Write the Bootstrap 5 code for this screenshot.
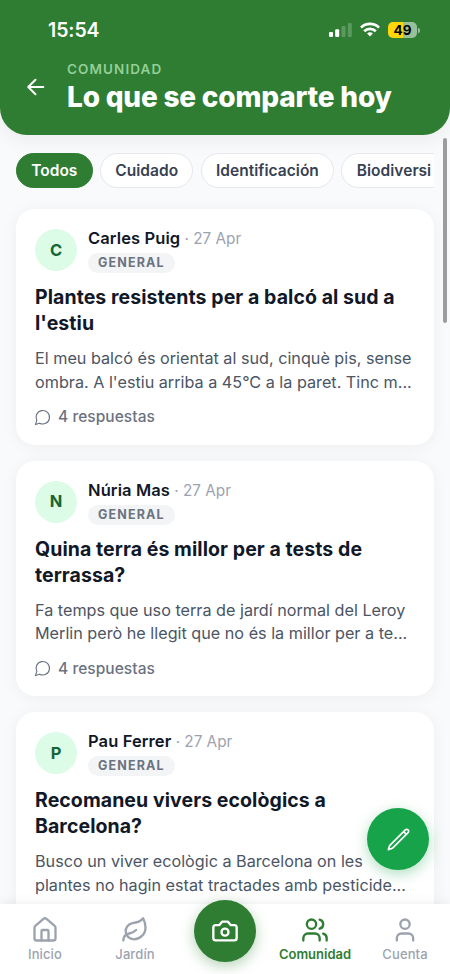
<!DOCTYPE html>
<html lang="es">
<head>
<meta charset="utf-8">
<meta name="viewport" content="width=device-width, initial-scale=1">
<title>Comunidad</title>
<link href="https://cdn.jsdelivr.net/npm/bootstrap@5.3.0/dist/css/bootstrap.min.css" rel="stylesheet">
<style>
html,body{height:974px;overflow:hidden}
body{font-family:Inter,"Liberation Sans",sans-serif;background:#f9fafb;color:#111827}
svg{display:block;flex:none}
.ico{fill:none;stroke:currentColor;stroke-width:2;stroke-linecap:round;stroke-linejoin:round}
.ico.fine{stroke-width:1.6}
.app{width:450px;height:974px}
.hero{height:134.5px;background:#2e7d32;border-radius:0 0 27px 27px;box-shadow:0 4px 20px rgba(17,24,39,.07)}
.status{height:60px;padding:0 30px 0 48px}
.clock{font-size:19.5px;font-weight:600;line-height:22px;letter-spacing:-.1px}
.wifi{margin-left:7px}
.battery{width:29px;height:16px;border-radius:5px;background:linear-gradient(90deg,#ffd60a 50%,#98c09a 50%);color:#000;font-size:13.5px;font-weight:700;line-height:16px}
.battery-tip{width:2px;height:5px;border-radius:0 2px 2px 0;background:#98c09a;margin-left:1px}
.eyebrow{font-size:13.5px;font-weight:600;letter-spacing:1.1px;line-height:18px;color:#93cf96}
.headline{font-size:28px;font-weight:800;line-height:39px;letter-spacing:-.2px}
.titles{margin-left:21px}
.back{padding:15px 0 0 25px}
.filters{margin:18.5px 16px 0;height:35px;gap:7.3px}
.chip{height:35px;padding:0 14.3px;border:1px solid #e5e7eb;border-radius:18px;background:#fff;color:#374151;font-size:15.5px;font-weight:600;line-height:33px;letter-spacing:.03px;flex:none}
.chip.on{background:#2e7d32;border-color:#2e7d32;color:#fff;letter-spacing:0}
.chip-wide{width:128px}
.feed{margin:21px 16px 0;gap:16px}
.post{height:235.6px;border:0;border-radius:19px;padding:20px 19px 0;box-shadow:0 2px 16px rgba(17,24,39,.05);flex:none}
.avatar{width:42px;height:42px;background:#dcfce7;color:#166534;font-size:16.5px;font-weight:700}
.by{margin-left:11px}
.who{font-size:16.5px;line-height:20px;font-weight:600;letter-spacing:.1px;margin-top:-1px}
.when{color:#9ca3af;font-weight:400;font-size:15.3px;letter-spacing:0}
.tag{height:20px;margin-top:3px;padding:0 10px;border-radius:10px;background:#f3f4f6;color:#6b7280;font-size:12.5px;font-weight:700;letter-spacing:1.15px;line-height:20px}
.byline{height:43px}
.topic{font-size:19.5px;font-weight:700;line-height:26px;letter-spacing:.07px;margin:12px 0 0}
.excerpt{font-size:16.2px;line-height:23.5px;letter-spacing:0;color:#4b5563;margin:11px 0 0}
.replies{font-size:15.5px;font-weight:500;line-height:20px;letter-spacing:.05px;color:#6b7280;margin:13px 0 0 -1px;gap:7px}
.ln{display:block;width:max-content}
.scroller{left:443px;top:138px;width:4px;height:185px;border-radius:2px;background:#9b9c9d}
.compose{left:367px;top:808px;width:62px;height:62px;background:#16a34a;box-shadow:0 4px 14px rgba(22,163,74,.35)}
.tabs{left:0;top:904px;width:450px;height:70px;background:#fff;box-shadow:0 -2px 10px rgba(17,24,39,.06)}
.tab{width:90px;color:#9ca3af;font-size:13px;font-weight:500;line-height:16px;letter-spacing:.1px;padding-top:11.5px}
.tab.on{color:#2e7d32;font-weight:600;letter-spacing:0}
.tab > svg{margin-bottom:2.5px}
.snap{width:62px;height:62px;margin-top:-4px;background:#2e7d32;box-shadow:0 4px 14px rgba(46,125,50,.35)}
</style>
<script src="https://cdn.jsdelivr.net/npm/bootstrap@5.3.0/dist/js/bootstrap.bundle.min.js"></script>
</head>
<body>
<div class="app position-relative overflow-hidden d-flex flex-column">
<header class="hero text-white flex-shrink-0">
 <div class="status d-flex align-items-center justify-content-between">
  <span class="clock">15:54</span>
  <div class="d-flex align-items-center">
   <svg width="24" height="16" viewBox="0 0 24 16" fill="#fff"><rect x="0" y="10" width="4" height="5" rx="1"/><rect x="6.200" y="7.200" width="4" height="7.800" rx="1"/><rect x="12.500" y="4" width="4" height="11" rx="1" opacity=".22"/><rect x="18.800" y="1" width="4" height="14" rx="1" opacity=".22"/></svg>
   <svg class="wifi" width="20" height="16" viewBox="0 0 20 16" fill="none" stroke="#fff" stroke-width="2.700"><path d="M1 5.600a12.800 12.800 0 0 1 18 0M4.200 9.200a8.200 8.200 0 0 1 11.600 0"/><path d="M10 10.300c1.200 0 2.100.4 2.900 1.100L10 14.600l-2.900-3.200c.8-.7 1.700-1.100 2.900-1.100z" fill="#fff" stroke="none"/></svg>
   <span class="battery text-center ms-2">49</span><span class="battery-tip"></span>
  </div>
 </div>
 <div class="d-flex">
  <div class="back"><svg class="ico" width="21" height="24" viewBox="0 0 21 24"><path d="M18.300 12H3.200M10.500 4.800L3.200 12l7.300 7.200"/></svg></div>
  <div class="titles"><div class="eyebrow">COMUNIDAD</div><h1 class="headline m-0 text-nowrap">Lo que se comparte hoy</h1></div>
 </div>
</header>
<div class="filters d-flex overflow-hidden flex-shrink-0 text-nowrap">
 <span class="chip on">Todos</span><span class="chip">Cuidado</span><span class="chip">Identificación</span><span class="chip chip-wide">Biodiversi</span>
</div>
<main class="feed d-flex flex-column">
 <article class="card post">
  <div class="byline d-flex"><span class="avatar rounded-circle d-flex align-items-center justify-content-center">C</span>
   <div class="by"><div class="who">Carles Puig <span class="when">· 27 Apr</span></div><span class="tag d-inline-block">GENERAL</span></div></div>
  <h2 class="topic"><span class="ln">Plantes resistents per a balcó al sud a</span><span class="ln">l'estiu</span></h2>
  <p class="excerpt"><span class="ln">El meu balcó és orientat al sud, cinquè pis, sense</span><span class="ln">ombra. A l'estiu arriba a 45°C a la paret. Tinc m...</span></p>
  <div class="replies d-flex align-items-center"><svg class="ico fine" width="17" height="17" viewBox="0 0 24 24"><path d="M7.900 20A9.500 9.500 0 1 0 4 16.100L2 22Z"/></svg>4 respuestas</div>
 </article>
 <article class="card post">
  <div class="byline d-flex"><span class="avatar rounded-circle d-flex align-items-center justify-content-center">N</span>
   <div class="by"><div class="who">Núria Mas <span class="when">· 27 Apr</span></div><span class="tag d-inline-block">GENERAL</span></div></div>
  <h2 class="topic"><span class="ln">Quina terra és millor per a tests de</span><span class="ln">terrassa?</span></h2>
  <p class="excerpt"><span class="ln">Fa temps que uso terra de jardí normal del Leroy</span><span class="ln">Merlin però he llegit que no és la millor per a te...</span></p>
  <div class="replies d-flex align-items-center"><svg class="ico fine" width="17" height="17" viewBox="0 0 24 24"><path d="M7.900 20A9.500 9.500 0 1 0 4 16.100L2 22Z"/></svg>4 respuestas</div>
 </article>
 <article class="card post">
  <div class="byline d-flex"><span class="avatar rounded-circle d-flex align-items-center justify-content-center">P</span>
   <div class="by"><div class="who">Pau Ferrer <span class="when">· 27 Apr</span></div><span class="tag d-inline-block">GENERAL</span></div></div>
  <h2 class="topic"><span class="ln">Recomaneu vivers ecològics a</span><span class="ln">Barcelona?</span></h2>
  <p class="excerpt"><span class="ln">Busco un viver ecològic a Barcelona on les</span><span class="ln">plantes no hagin estat tractades amb pesticide...</span></p>
 </article>
</main>
<div class="scroller position-absolute"></div>
<button class="compose position-absolute border-0 rounded-circle text-white d-flex align-items-center justify-content-center p-0" aria-label="Escribir"><svg class="ico fine" width="25" height="25" viewBox="0 0 24 24"><path d="M16.862 4.487l1.687-1.688a1.875 1.875 0 1 1 2.652 2.652L6.832 19.820a4.500 4.500 0 0 1-1.897 1.130l-2.685.8.8-2.685a4.500 4.500 0 0 1 1.130-1.897L16.863 4.487zm0 0L19.500 7.125"/></svg></button>
<nav class="tabs position-absolute d-flex">
 <div class="tab d-flex flex-column align-items-center"><svg class="ico" width="28" height="28" viewBox="0 0 24 24"><path d="M15 21v-8a1 1 0 0 0-1-1h-4a1 1 0 0 0-1 1v8"/><path d="M3 10a2 2 0 0 1 .709-1.528l7-5.999a2 2 0 0 1 2.582 0l7 5.999A2 2 0 0 1 21 10v9a2 2 0 0 1-2 2H5a2 2 0 0 1-2-2z"/></svg>Inicio</div>
 <div class="tab d-flex flex-column align-items-center"><svg class="ico" width="28" height="28" viewBox="0 0 24 24"><path d="M11 20A7 7 0 0 1 9.800 6.100C15.500 5 17 4.480 19 2c1 2 2 4.180 2 8 0 5.500-4.780 10-10 10Z"/><path d="M2 21c0-3 1.850-5.360 5.080-6C9.500 14.520 12 13 13 12"/></svg>Jardín</div>
 <div class="tab p-0 d-flex justify-content-center"><span class="snap rounded-circle text-white d-flex align-items-center justify-content-center"><svg class="ico" width="28" height="28" viewBox="0 0 24 24"><path d="M14.500 4h-5L7 7H4a2 2 0 0 0-2 2v9a2 2 0 0 0 2 2h16a2 2 0 0 0 2-2V9a2 2 0 0 0-2-2h-3z"/><circle cx="12" cy="13" r="3"/></svg></span></div>
 <div class="tab on d-flex flex-column align-items-center"><svg class="ico" width="28" height="28" viewBox="0 0 24 24"><path d="M16 21v-2a4 4 0 0 0-4-4H6a4 4 0 0 0-4 4v2M22 21v-2a4 4 0 0 0-3-3.870M16 3.130a4 4 0 0 1 0 7.750"/><circle cx="9" cy="7" r="4"/></svg>Comunidad</div>
 <div class="tab d-flex flex-column align-items-center"><svg class="ico" width="28" height="28" viewBox="0 0 24 24"><path d="M19 21v-2a4 4 0 0 0-4-4H9a4 4 0 0 0-4 4v2"/><circle cx="12" cy="7" r="4"/></svg>Cuenta</div>
</nav>
</div>
</body>
</html>
